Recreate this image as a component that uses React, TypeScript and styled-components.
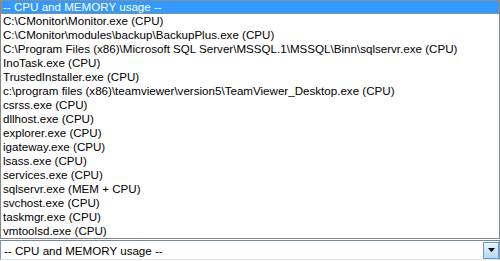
import * as React from "react";
import styled, { createGlobalStyle } from "styled-components";

const GlobalStyle = createGlobalStyle`
  html, body {
    margin: 0;
    padding: 0;
    background: #ffffff;
  }
  body {
    font-family: "Liberation Sans", Arial, sans-serif;
    font-size: 11.6px;
  }
`;

const Wrapper = styled.div`
  width: 500px;
  height: 261px;
  display: flex;
  flex-direction: column;
  background: #ffffff;
`;

const List = styled.div`
  height: 238px;
  border-left: 1px solid #828790;
  border-right: 1px solid #828790;
  border-bottom: 1px solid #828790;
  display: flex;
  flex-direction: column;
`;

const Option = styled.div<{ $selected?: boolean }>`
  height: 14px;
  line-height: 14px;
  padding: 0 2px;
  white-space: nowrap;
  overflow: hidden;
  color: ${p => (p.$selected ? "#ffffff" : "#000000")};
  background: ${p => (p.$selected ? "#3399ff" : "transparent")};
  box-sizing: border-box;
  ${p => (p.$selected ? "outline: 1px dotted #c98a3e; outline-offset: -1px;" : "")}
`;

const Select = styled.div`
  height: 20px;
  margin-top: 1px;
  border: 1px solid #7f9db9;
  border-top-color: #6f8aa4;
  border-bottom-color: #d7e6f2;
  display: flex;
  align-items: center;
  box-sizing: border-box;
`;

const Value = styled.div`
  flex: 1;
  padding-left: 3px;
  color: #000000;
  white-space: nowrap;
`;

const ArrowButton = styled.div`
  width: 16px;
  height: 17px;
  border: 1px solid #6f9ac6;
  box-sizing: border-box;
  background: linear-gradient(to bottom, #eaf5fd 0%, #cde6f9 50%, #b3d8f4 100%);
  display: flex;
  align-items: center;
  justify-content: center;
`;

const options = [
  "-- CPU and MEMORY usage --",
  "C:\\CMonitor\\Monitor.exe (CPU)",
  "C:\\CMonitor\\modules\\backup\\BackupPlus.exe (CPU)",
  "C:\\Program Files (x86)\\Microsoft SQL Server\\MSSQL.1\\MSSQL\\Binn\\sqlservr.exe (CPU)",
  "InoTask.exe (CPU)",
  "TrustedInstaller.exe (CPU)",
  "c:\\program files (x86)\\teamviewer\\version5\\TeamViewer_Desktop.exe (CPU)",
  "csrss.exe (CPU)",
  "dllhost.exe (CPU)",
  "explorer.exe (CPU)",
  "igateway.exe (CPU)",
  "lsass.exe (CPU)",
  "services.exe (CPU)",
  "sqlservr.exe (MEM + CPU)",
  "svchost.exe (CPU)",
  "taskmgr.exe (CPU)",
  "vmtoolsd.exe (CPU)"
];

function App() {
  return (
    <Wrapper>
      <GlobalStyle />
      <List>
        {options.map((text, i) => (
          <Option key={i} $selected={i === 0}>
            {text}
          </Option>
        ))}
      </List>
      <Select>
        <Value>{options[0]}</Value>
        <ArrowButton>
          <svg width="7" height="4" viewBox="0 0 7 4">
            <polygon points="0,0 7,0 3.5,4" fill="#000000" />
          </svg>
        </ArrowButton>
      </Select>
    </Wrapper>
  );
}

export default App;
